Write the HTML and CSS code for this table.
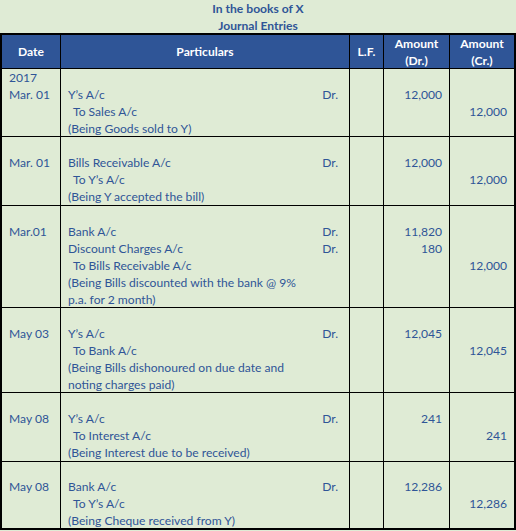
FILE: index.html
```html
<!DOCTYPE html>
<html>
<head>
<meta charset="utf-8">
<link rel="stylesheet" href="styles.css">
</head>
<body>
<div class="title">
  <div>In the books of X</div>
  <div>Journal Entries</div>
</div>
<div class="sheet">
  <div class="hd">Date</div>
  <div class="hd">Particulars</div>
  <div class="hd">L.F.</div>
  <div class="hd">Amount<br>(Dr.)</div>
  <div class="hd">Amount<br>(Cr.)</div>

  <div class="c date"><div>2017</div><div>Mar. 01</div></div>
  <div class="c part gap">
    <div class="ln"><span>Y’s A/c</span><span class="dr">Dr.</span></div>
    <div class="ln to">To Sales A/c</div>
    <div class="ln">(Being Goods sold to Y)</div>
  </div>
  <div class="c"></div>
  <div class="c amt gap"><div class="ln">12,000</div></div>
  <div class="c amt gap"><div class="ln">&nbsp;</div><div class="ln">12,000</div></div>

  <div class="c date gap"><div>Mar. 01</div></div>
  <div class="c part gap">
    <div class="ln"><span>Bills Receivable A/c</span><span class="dr">Dr.</span></div>
    <div class="ln to">To Y’s A/c</div>
    <div class="ln">(Being Y accepted the bill)</div>
  </div>
  <div class="c"></div>
  <div class="c amt gap"><div class="ln">12,000</div></div>
  <div class="c amt gap"><div class="ln">&nbsp;</div><div class="ln">12,000</div></div>

  <div class="c date gap"><div>Mar.01</div></div>
  <div class="c part gap">
    <div class="ln"><span>Bank A/c</span><span class="dr">Dr.</span></div>
    <div class="ln"><span>Discount Charges A/c</span><span class="dr">Dr.</span></div>
    <div class="ln to">To Bills Receivable A/c</div>
    <div class="ln">(Being Bills discounted with the bank @ 9%</div>
    <div class="ln">p.a. for 2 month)</div>
  </div>
  <div class="c"></div>
  <div class="c amt gap"><div class="ln">11,820</div><div class="ln">180</div></div>
  <div class="c amt gap"><div class="ln">&nbsp;</div><div class="ln">&nbsp;</div><div class="ln">12,000</div></div>

  <div class="c date gap"><div>May 03</div></div>
  <div class="c part gap">
    <div class="ln"><span>Y’s A/c</span><span class="dr">Dr.</span></div>
    <div class="ln to">To Bank A/c</div>
    <div class="ln">(Being Bills dishonoured on due date and</div>
    <div class="ln">noting charges paid)</div>
  </div>
  <div class="c"></div>
  <div class="c amt gap"><div class="ln">12,045</div></div>
  <div class="c amt gap"><div class="ln">&nbsp;</div><div class="ln">12,045</div></div>

  <div class="c date gap"><div>May 08</div></div>
  <div class="c part gap">
    <div class="ln"><span>Y’s A/c</span><span class="dr">Dr.</span></div>
    <div class="ln to">To Interest A/c</div>
    <div class="ln">(Being Interest due to be received)</div>
  </div>
  <div class="c"></div>
  <div class="c amt gap"><div class="ln">241</div></div>
  <div class="c amt gap"><div class="ln">&nbsp;</div><div class="ln">241</div></div>

  <div class="c date gap2"><div>May 08</div></div>
  <div class="c part gap2">
    <div class="ln"><span>Bank A/c</span><span class="dr">Dr.</span></div>
    <div class="ln to">To Y’s A/c</div>
    <div class="ln">(Being Cheque received from Y)</div>
  </div>
  <div class="c"></div>
  <div class="c amt gap2"><div class="ln">12,286</div></div>
  <div class="c amt gap2"><div class="ln">&nbsp;</div><div class="ln">12,286</div></div>
</div>
</body>
</html>
```
FILE: styles.css
```css
* { box-sizing: border-box; }
html, body {
  margin: 0;
  padding: 0;
  background: #dfebd5;
  width: 516px;
  height: 531px;
  overflow: hidden;
}
body {
  font-family: Lato, "Liberation Sans", sans-serif;
  font-size: 12.1px;
  color: #2f5597;
}
.title {
  height: 33px;
  text-align: center;
  font-weight: bold;
  line-height: 17px;
}
.sheet {
  display: grid;
  grid-template-columns: 58px 288px 33px 65px 64px;
  grid-template-rows: 33px 67px 68px 101px 84px 68px 66px;
  gap: 1px;
  background: #000;
  border: 2px solid #000;
  width: 516px;
}
.hd {
  background: #2f5597;
  color: #fff;
  font-weight: bold;
  text-align: center;
  line-height: 17px;
  display: flex;
  align-items: center;
  justify-content: center;
}
.c {
  background: #dfebd5;
  line-height: 17px;
}
.date { padding-left: 7px; }
.part { padding-left: 7px; padding-right: 11px; }
.amt { text-align: right; padding-right: 7px; }
.gap { padding-top: 17px; }
.gap2 { padding-top: 16px; }
.ln { display: flex; justify-content: space-between; white-space: nowrap; }
.amt .ln { justify-content: flex-end; }
.to { padding-left: 5px; }
```
